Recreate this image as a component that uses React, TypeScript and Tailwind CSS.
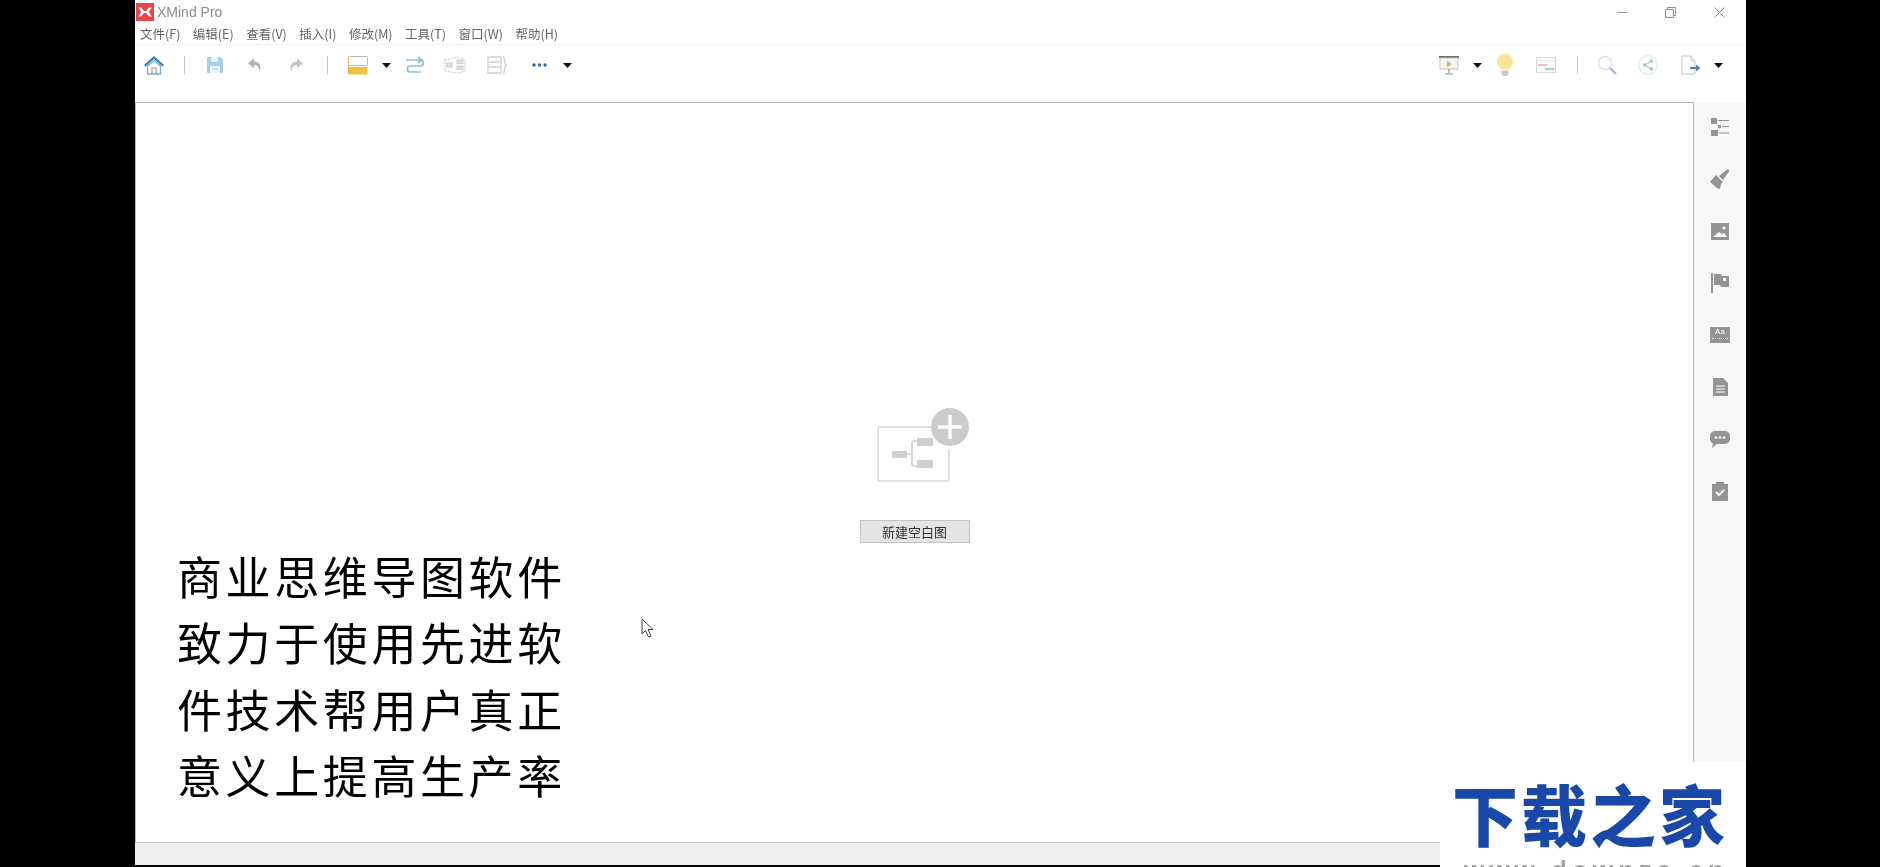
import React from "react";

const cjk = "font-['Noto_Sans_CJK_SC','Noto_Sans',sans-serif]";

const Caret = () => (
  <svg width="9" height="5" viewBox="0 0 9 5" className="block"><path d="M0 0h9L4.500 5z" fill="#111" /></svg>
);

const Slot = ({ w, children }: { w: number; children?: React.ReactNode }) => (
  <div className="flex h-full items-center justify-center" style={{ width: w }}>{children}</div>
);

const Sep = () => <div className="h-[18px] w-px bg-[#c9cbd0]" />;

const Home = () => (
  <svg width="22" height="20" viewBox="0 0 22 20">
    <path d="M1 10 11 1l10 9-1.500 1.400L11 4 2.500 11.400z" fill="#2f7fc4" />
    <path d="M4.500 11 11 5.500 17.500 11v8h-13z" fill="#fff" stroke="#7ba9d0" strokeWidth="1.300" />
    <path d="M9 19v-6h4v6" fill="none" stroke="#8a9aa8" strokeWidth="1.200" />
  </svg>
);
const Save = () => (
  <svg width="18" height="18" viewBox="0 0 18 18">
    <path d="M1 2a1 1 0 0 1 1-1h12l3 3v12a1 1 0 0 1-1 1H2a1 1 0 0 1-1-1z" fill="#a9cbec" />
    <path d="M5 1h7v5H5z" fill="#e8f1fa" /><path d="M4 10h10v7H4z" fill="#eef5fb" />
    <path d="M6 13h6" stroke="#a9cbec" />
  </svg>
);
const Undo = ({ flip }: { flip?: boolean }) => (
  <svg width="16" height="16" viewBox="0 0 16 16" style={{ transform: flip ? "scaleX(-1)" : undefined }}>
    <path d="M7 1 1 6.500 7 11V8c3 0 5 1.500 5.500 6.500C15 9 12.500 4.500 7 4.500z" fill={flip ? "#c3c5c8" : "#b0b3b6"} />
  </svg>
);
const Topic = () => (
  <svg width="20" height="19" viewBox="0 0 20 19">
    <rect x=".5" y=".5" width="19" height="9" rx="1" fill="#fff" stroke="#b9b9b9" />
    <rect x=".5" y="11" width="19" height="7.500" rx="1" fill="#f2c23e" />
    <path d="M.5 1v17" stroke="#e3b144" />
  </svg>
);
const Relation = () => (
  <svg width="20" height="18" viewBox="0 0 20 18" fill="none" stroke="#8fc0de" strokeWidth="1.700">
    <path d="M1 4h15M13 1l4 3-4 3" />
    <path d="M16 4c3 0 3 6 0 6H5c-3.500 0-3.500 6 0 6h11" />
  </svg>
);
const Boundary = () => (
  <svg width="22" height="18" viewBox="0 0 22 18" fill="none" stroke="#cfd3d8" strokeWidth="1.200">
    <path d="M1 4 14 1l7 2v12l-7 2-13-2z" strokeDasharray="2 1" />
    <rect x="3" y="7" width="5" height="4" fill="#dde0e4" />
    <rect x="13" y="4" width="6" height="3.500" fill="#dde0e4" /><rect x="13" y="10" width="6" height="3.500" fill="#dde0e4" />
  </svg>
);
const Summary = () => (
  <svg width="20" height="20" viewBox="0 0 20 20" fill="none" stroke="#cfd1d4" strokeWidth="1.300">
    <path d="M1 2h13v16H1zM1 7h13M1 12h13" />
    <path d="M16 1c2 0 1 8 3 9-2 1-1 9-3 9" />
  </svg>
);
const Dots = () => (
  <svg width="15" height="4" viewBox="0 0 15 4" fill="#2b6aa8"><circle cx="2" cy="2" r="1.700" /><circle cx="7.500" cy="2" r="1.700" /><circle cx="13" cy="2" r="1.700" /></svg>
);
const Present = () => (
  <svg width="20" height="20" viewBox="0 0 20 20">
    <path d="M0 1h20v2H0z" fill="#6d6d6d" />
    <path d="M1 3h18v11H1z" fill="#f6f6f6" stroke="#c4c4c4" />
    <path d="M8 5.500l5 3.500-5 3.500z" fill="#d9b25a" />
    <path d="M10 14v4M6 19h8" stroke="#8d8d8d" strokeWidth="1.200" />
  </svg>
);
const Bulb = () => (
  <svg width="16" height="22" viewBox="0 0 16 22">
    <path d="M8 0c4.500 0 8 3 8 7.500 0 3.500-3 5-3.500 8h-9C3 12.500 0 11 0 7.500 0 3 3.500 0 8 0z" fill="#fae596" />
    <path d="M4.500 16.500h7V20l-1.500 2H6l-1.500-2z" fill="#cbcbc2" />
  </svg>
);
const Gantt = () => (
  <svg width="20" height="16" viewBox="0 0 20 16">
    <rect x=".5" y=".5" width="19" height="15" fill="#fafafa" stroke="#d9d9d9" />
    <path d="M.5 4h19" stroke="#e4e4e4" /><path d="M2 8h9" stroke="#e59a9a" strokeWidth="1.200" /><path d="M9 12h9" stroke="#8cb4cf" strokeWidth="1.400" />
  </svg>
);
const Search = () => (
  <svg width="20" height="20" viewBox="0 0 20 20" fill="none">
    <circle cx="8" cy="8" r="6.500" stroke="#e0e2e4" strokeWidth="1.500" />
    <path d="M13 13l6 6" stroke="#9db9d4" strokeWidth="2.200" />
  </svg>
);
const Share = () => (
  <svg width="20" height="20" viewBox="0 0 20 20" fill="none">
    <circle cx="10" cy="10" r="9.300" stroke="#dfe8dc" strokeWidth="1.200" />
    <path d="M13.500 6 6.500 10l7 4" stroke="#a5cdab" strokeWidth="1.200" />
    <circle cx="13.500" cy="6" r="1.800" fill="#a5cdab" /><circle cx="6.500" cy="10" r="1.800" fill="#a5cdab" /><circle cx="13.500" cy="14" r="1.800" fill="#a5cdab" />
  </svg>
);
const Export = () => (
  <svg width="20" height="20" viewBox="0 0 20 20" fill="none">
    <path d="M1 1h9l4 5v13H1z" fill="#fff" stroke="#c5c5c5" /><path d="M10 1v5h4" stroke="#c5c5c5" />
    <path d="M9 13h9" stroke="#4f7fbd" strokeWidth="2" /><path d="M15 9.500l4.500 3.500-4.500 3.500z" fill="#4f7fbd" />
  </svg>
);

const G = "#949494";
const sideIcons = [
  <svg key="a" width="18" height="18" viewBox="0 0 18 18" fill={G}>
    <rect x="0" y="0" width="6" height="6" /><rect x="0" y="12" width="7" height="6" /><rect x="7" y="7" width="3" height="3" />
    <path d="M7 2.500h11M11 8.500h7M8 15h10" stroke={G} strokeWidth="1" />
  </svg>,
  <svg key="b" width="20" height="21" viewBox="0 0 20 21" fill={G}>
    <path d="M0 13 6 6l7 7-2 2-1 5-3-1z" /><path d="M9 7l6-5c1-1 4-2 4-1s0 3-2 4l-4 6z" />
  </svg>,
  <svg key="c" width="18" height="17" viewBox="0 0 18 17">
    <rect width="18" height="17" fill={G} /><path d="M2 14l6-5 3 2 2-1 3 4z" fill="#fff" /><circle cx="13" cy="5" r="1.500" fill="#fff" />
  </svg>,
  <svg key="d" width="18" height="20" viewBox="0 0 18 20" fill={G}>
    <rect width="2" height="20" /><path d="M3 1h7l1 2h7v11h-8l-1-2H3z" /><rect x="12" y="5" width="3" height="3" fill="#fff" />
  </svg>,
  <div key="e" className="flex h-[16px] w-[20px] flex-col items-center rounded-[1px] bg-[#949494] font-['Liberation_Sans',sans-serif] text-[8px] leading-[10px] text-white">
    Aa<div className="mt-px w-[16px] border-t border-dotted border-white" />
  </div>,
  <svg key="f" width="15" height="18" viewBox="0 0 15 18">
    <path d="M0 0h10l5 5v13H0z" fill={G} /><path d="M3 8h9M3 11h9M3 14h9" stroke="#fff" />
  </svg>,
  <svg key="g" width="20" height="18" viewBox="0 0 20 18">
    <path d="M5 0h10a5 5 0 0 1 5 5v3a5 5 0 0 1-5 5H7l-5 4 1-4.500A5 5 0 0 1 0 8V5a5 5 0 0 1 5-5z" fill={G} />
    <circle cx="6" cy="6.500" r="1.200" fill="#fff" /><circle cx="10" cy="6.500" r="1.200" fill="#fff" /><circle cx="14" cy="6.500" r="1.200" fill="#fff" />
  </svg>,
  <svg key="h" width="16" height="19" viewBox="0 0 16 19">
    <path d="M0 2h4V0h8v2h4v17H0z" fill={G} /><path d="M4 10l3 3 5-5" stroke="#fff" strokeWidth="2" fill="none" />
  </svg>,
];

const menus = ["文件(F)", "编辑(E)", "查看(V)", "插入(I)", "修改(M)", "工具(T)", "窗口(W)", "帮助(H)"];
const lines = ["商业思维导图软件", "致力于使用先进软", "件技术帮用户真正", "意义上提高生产率"];

export default function App() {
  return (
    <div className={`relative h-[867px] w-[1880px] overflow-hidden bg-black pl-[135px] blur-[0.5px] ${cjk}`}>
      <div className="flex h-[865px] w-[1611px] flex-col bg-white">
        {/* title bar */}
        <div className="flex h-[24px] shrink-0 items-center">
          <svg width="18" height="18" viewBox="0 0 18 18" className="ml-px">
            <rect width="18" height="18" fill="#e8444c" />
            <path d="M2 4.500h3l3 3.500H10l3-3.500h3L12.500 9 16 13.500h-3L10 10H8l-3 3.500H2L5.500 9z" fill="#fff" />
          </svg>
          <span className="ml-[3px] font-['Liberation_Sans',sans-serif] text-[14px] text-[#8c8c8c]">XMind Pro</span>
          <div className="ml-auto flex items-center">
            <Slot w={49}><div className="h-px w-[10px] bg-[#9a9a9a]" /></Slot>
            <Slot w={49}>
              <svg width="11" height="11" viewBox="0 0 11 11" fill="none" stroke="#8f8f8f"><path d="M.5 2.500h8v8h-8zM2.500 2.500v-2h8v8h-2" /></svg>
            </Slot>
            <Slot w={49}>
              <svg width="11" height="11" viewBox="0 0 11 11" stroke="#909090"><path d="M.5.500l10 10M10.500.500l-10 10" /></svg>
            </Slot>
            <div className="w-[2px]" />
          </div>
        </div>
        {/* menu */}
        <div className="flex h-[21px] shrink-0 items-center gap-[12.500px] border-b border-[#f1f1f1] pl-[5px] text-[12.500px] text-[#666]">
          {menus.map((m) => <span key={m}>{m}</span>)}
        </div>
        {/* toolbar */}
        <div className="flex h-[57px] shrink-0 pb-[17px]">
          <Slot w={38}><Home /></Slot>
          <Slot w={22}><Sep /></Slot>
          <Slot w={40}><Save /></Slot>
          <Slot w={40}><Undo /></Slot>
          <Slot w={42}><Undo flip /></Slot>
          <Slot w={20}><Sep /></Slot>
          <Slot w={42}><Topic /></Slot>
          <Slot w={14}><Caret /></Slot>
          <Slot w={44}><Relation /></Slot>
          <Slot w={36}><Boundary /></Slot>
          <Slot w={48}><Summary /></Slot>
          <Slot w={36}><Dots /></Slot>
          <Slot w={20}><Caret /></Slot>
          <div className="flex-1" />
          <Slot w={28}><Present /></Slot>
          <Slot w={28}><Caret /></Slot>
          <Slot w={28}><Bulb /></Slot>
          <Slot w={54}><Gantt /></Slot>
          <Slot w={8}><Sep /></Slot>
          <Slot w={52}><Search /></Slot>
          <Slot w={30}><Share /></Slot>
          <div className="w-[16px]" />
          <Slot w={24}><Export /></Slot>
          <div className="w-[3px]" />
          <Slot w={24}><Caret /></Slot>
          <div className="w-[16px]" />
        </div>
        {/* main */}
        <div className="flex min-h-0 flex-1">
          <div className="flex w-[1559px] flex-col items-center border-t border-l border-r border-[#b7b7b7] pt-[301px]">
            <svg width="100" height="84" viewBox="0 0 100 84" className="ml-[14px]">
              <path d="M66 23H8a2 2 0 0 0-2 2v50a2 2 0 0 0 2 2h67a2 2 0 0 0 2-2V45" fill="none" stroke="#d7d7d7" strokeWidth="1.500" />
              <rect x="20" y="47" width="15" height="7" fill="#cfcfcf" />
              <path d="M35 50h5M45 37h-3a2 2 0 0 0-2 2v21a2 2 0 0 0 2 2h3" fill="none" stroke="#cfcfcf" strokeWidth="1.500" />
              <rect x="45" y="34" width="16" height="8" fill="#cfcfcf" /><rect x="45" y="56" width="16" height="8" fill="#cfcfcf" />
              <circle cx="78" cy="23" r="19" fill="#cbcbcb" />
              <path d="M78 11v24M66 23h24" stroke="#fff" strokeWidth="3.500" />
            </svg>
            <button className="mt-[32px] h-[23px] w-[110px] border border-[#c2c2c2] bg-[#e4e4e4] text-[13px] leading-none text-[#333]">新建空白图</button>
          </div>
          <div className="flex flex-1 flex-col items-center gap-[4.100px] bg-[#f7f7f8] pt-[1px]">
            {sideIcons.map((ic, i) => (
              <div key={i} className="flex h-[48px] w-full items-center justify-center">{ic}</div>
            ))}
          </div>
        </div>
        {/* status */}
        <div className="h-[23px] shrink-0 border-t border-[#c9c9c9] bg-[#f0f0f0]" />
      </div>

      {/* caption overlay */}
      <div className="absolute top-[543px] left-[177px] text-[45px] leading-[66.300px] tracking-[3.600px] whitespace-nowrap text-black">
        {lines.map((l) => <div key={l}>{l}</div>)}
      </div>

      {/* pointer */}
      <svg width="14" height="21" viewBox="0 0 14 21" className="absolute top-[618px] left-[641px]">
        <path d="M1 1v15l3.500-3.500 3 6.500 2.500-1-3-6.500h5z" fill="#fff" stroke="#444" strokeWidth="1" />
      </svg>

      {/* watermark */}
      <div className="absolute top-[762px] left-[1440px] h-[105px] w-[306px] overflow-hidden bg-white">
        <div className="mt-[5px] ml-[12px] text-[66px] leading-[90px] font-black tracking-[3px] whitespace-nowrap text-[#1a48a8]">下载之家</div>
        <div className="ml-[24px] font-['Liberation_Sans',sans-serif] text-[26px] leading-[26px] font-bold tracking-[5px] text-[#a5a5a5]">www.downza.cn</div>
      </div>
    </div>
  );
}
